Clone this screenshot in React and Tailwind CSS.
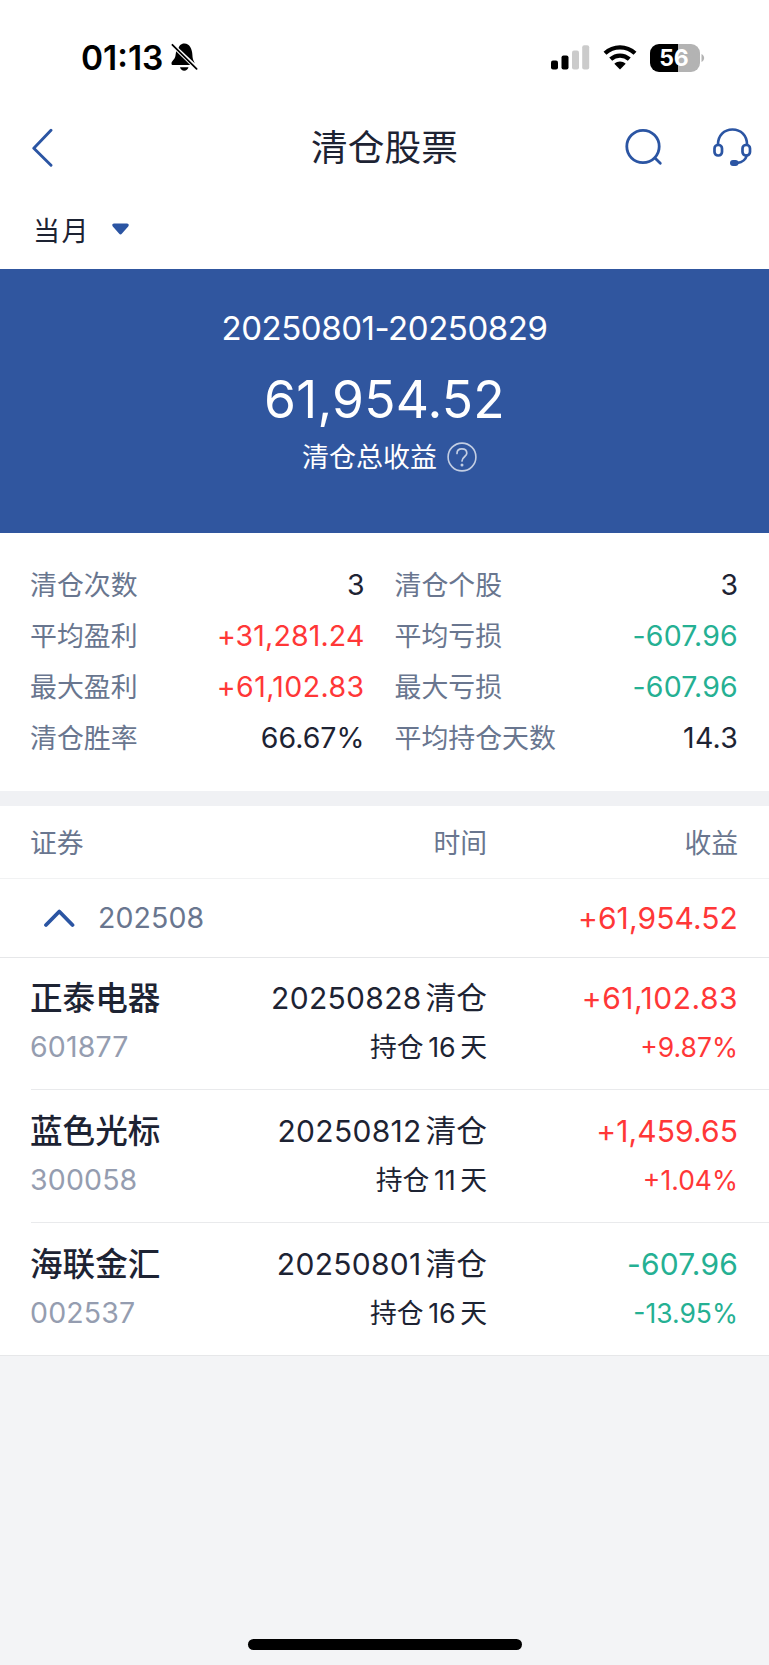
const STATS = [
  ["清仓次数", "3", "text-[#1d2333]", "清仓个股", "3", "text-[#1d2333]"],
  ["平均盈利", "+31,281.24", "text-[#ff3737] tracking-[0.150px]", "平均亏损", "-607.96", "text-[#25b093] tracking-[0.200px]"],
  ["最大盈利", "+61,102.83", "text-[#ff3737] tracking-[0.400px]", "最大亏损", "-607.96", "text-[#25b093] tracking-[0.200px]"],
  ["清仓胜率", "66.67%", "text-[#1d2333]", "平均持仓天数", "14.3", "text-[#1d2333] tracking-[0.200px]"],
];

const STOCKS = [
  { name: "正泰电器", code: "601877", date: "20250828", days: "16", profit: "+61,102.83", rate: "+9.87%", color: "text-[#ff3737]", tracking: "tracking-[0.500px]" },
  { name: "蓝色光标", code: "300058", date: "20250812", days: "11", profit: "+1,459.65", rate: "+1.04%", color: "text-[#ff3737]", tracking: "tracking-[0.100px]" },
  { name: "海联金汇", code: "002537", date: "20250801", days: "16", profit: "-607.96", rate: "-13.95%", color: "text-[#25b093]", tracking: "tracking-[0.200px]" },
];

function StatusBar() {
  return (
    <div className="flex h-[108px] items-start justify-between pt-[38px] pr-[64px] pl-[81px] text-black">
      <div className="flex h-[39px] items-center">
        <span className="pt-px text-[33.500px] leading-[39px] font-semibold tracking-[0px]">01:13</span>
        <svg className="ml-[8px]" width="27" height="29" viewBox="0 0 27 29">
          <path d="M13.500 0.500C9.500 0.500 8.200 3.300 7.600 5L24 20.500C23 18.500 21.500 16.500 21.400 12C21.200 6 18.500 0.500 13.500 0.500Z" />
          <path d="M5.100 8.300C4.900 10 4.700 11 4.500 12.500C3.900 17 0.500 17.600 0.500 20.500C0.500 21.600 1 22 2.200 22H19.200Z" />
          <path d="M9 24.300H17.500C16.800 26.500 15.300 27.700 13.200 27.700C11.100 27.700 9.600 26.500 9 24.300Z" />
          <path d="M1.400 1.800L25.600 25.800" stroke="black" strokeWidth="1.800" strokeLinecap="round" />
        </svg>
      </div>
      <div className="flex h-[39px] items-center">
        <svg width="39" height="25" viewBox="0 0 39 25">
          <rect x="0" y="15.500" width="7" height="9" rx="2" />
          <rect x="10.500" y="10.500" width="7" height="14" rx="2" />
          <rect x="21" y="5.500" width="7" height="19" rx="2" fill="#cbcbcb" />
          <rect x="31.200" y="0.300" width="7" height="24.200" rx="2" fill="#cbcbcb" />
        </svg>
        <svg className="ml-[13px]" width="34" height="25" viewBox="0 0 34 25">
          <path d="M2 8.300C10.500 0.400 23.500 0.400 32 8.300" fill="none" stroke="black" strokeWidth="4.300" />
          <path d="M7.700 14.200C13 9.300 21 9.300 26.300 14.200" fill="none" stroke="black" strokeWidth="4.300" />
          <path d="M11.300 18.800C14.700 15.800 19.300 15.800 22.700 18.800L17 24.500Z" />
        </svg>
        <div className="ml-[13px] flex h-[28px] w-[50px] items-center justify-center rounded-[9px] bg-linear-to-r from-black from-[56%] to-[#b3b3b3] to-[56%]">
          <span className="-ml-[2px] text-[23px] leading-[28px] font-bold tracking-[0px] text-white">56</span>
        </div>
        <svg className="ml-px" width="4" height="10" viewBox="0 0 4 10">
          <path d="M0.500 1C4 2.500 4 7.500 0.500 9Z" fill="#b3b3b3" />
        </svg>
      </div>
    </div>
  );
}

function NavBar() {
  return (
    <div className="grid h-[80px] grid-cols-[1fr_auto_1fr] items-center px-[17px] pb-[2px]">
      <svg className="ml-[14px]" width="22" height="40" viewBox="0 0 22 40" fill="none" stroke="#2b55a3" strokeWidth="2.900" strokeLinecap="round" strokeLinejoin="round">
        <path d="M20 3.200L2.800 21.200L20 38.200" />
      </svg>
      <h1 className="pt-[2px] text-[36.7px] leading-[50px] text-[#1d2333]">清仓股票</h1>
      <div className="flex items-center justify-end">
        <svg width="38" height="40" viewBox="0 0 38 40" fill="none" stroke="#2b55a3" strokeWidth="2.800" strokeLinecap="round">
          <circle cx="18" cy="19.500" r="16.200" />
          <path d="M30.200 31.200L35.300 36.200" />
        </svg>
        <svg className="ml-[49px]" width="40" height="40" viewBox="0 0 40 40" fill="none" stroke="#2b55a3" strokeWidth="2.700" strokeLinecap="round">
          <path d="M6 17.500C6 8.500 12 2.500 20.500 2.500C29 2.500 35 8.500 35 17.500" />
          <rect x="2.500" y="18" width="7.500" height="10.500" rx="3.500" />
          <rect x="30.500" y="18" width="7.500" height="10.500" rx="3.500" />
          <path d="M34.800 28.500C33.500 33 30 35.300 25.500 35.800" />
          <rect x="18" y="33" width="8.500" height="6" rx="3" fill="#2b55a3" stroke="none" />
        </svg>
      </div>
    </div>
  );
}

function Summary() {
  return (
    <section className="flex h-[264px] flex-col items-center bg-[#30569f] text-white">
      <div className="mt-[37px] text-[33px] leading-[44px] tracking-[-0.450px]">20250801-20250829</div>
      <div className="mt-[18px] text-[51.500px] leading-[62px] tracking-[0.200px]">61,954.52</div>
      <div className="mt-[8px] flex h-[38px] items-center pl-[10px]">
        <span className="pt-[2px] text-[27px] leading-[38px]">清仓总收益</span>
        <svg className="ml-[10px]" width="30" height="30" viewBox="0 0 30 30" fill="none" stroke="#c3cee3" strokeLinecap="round">
          <circle cx="15" cy="15" r="13.900" strokeWidth="1.600" />
          <path d="M10 11.500C10 8.500 12.200 6.900 14.900 6.900C17.700 6.900 19.800 8.600 19.800 11.200C19.800 14.600 15 15 15 19" strokeWidth="1.700" />
          <circle cx="15" cy="23" r="1.500" fill="#c3cee3" stroke="none" />
        </svg>
      </div>
    </section>
  );
}

function Stats() {
  return (
    <section className="flex h-[258px] flex-col pt-[26px] pr-[31px] pl-[30px]">
      {STATS.map(([l1, v1, c1, l2, v2, c2]) => (
        <div key={l1} className="flex h-[51px] items-center">
          <div className="flex w-[334.500px] items-center justify-between">
            <span className="text-[26.900px] leading-[40px] text-[#69768f]">{l1}</span>
            <span className={"pb-px text-[28.500px] leading-[39px] " + c1}>{v1}</span>
          </div>
          <div className="ml-[30px] flex grow items-center justify-between">
            <span className="text-[26.900px] leading-[40px] text-[#69768f]">{l2}</span>
            <span className={"pb-px text-[28.500px] leading-[39px] " + c2}>{v2}</span>
          </div>
        </div>
      ))}
    </section>
  );
}

function StockRow({ stock, first, last }) {
  return (
    <div className={last ? "border-b border-[#e6e7e9]" : "pl-[31px]"}>
      <div
        className={
          last
            ? "flex h-[132px] pt-[18px] pr-[31px] pl-[30px]"
            : first
              ? "flex h-[132px] border-b border-[#e9eaec] pt-[17px] pr-[31px]"
              : "flex h-[133px] border-b border-[#e9eaec] pt-[18px] pr-[31px]"
        }
      >
        <div className={last ? "w-[200px]" : "-ml-px w-[200px]"}>
          <div className="text-[32.600px] leading-[46px] font-medium text-[#1d2333]">{stock.name}</div>
          <div className="mt-[6px] text-[28.500px] leading-[40px] tracking-[0.150px] text-[#959db0]">{stock.code}</div>
        </div>
        <div className="flex w-[257px] flex-col items-end text-[#1d2333]">
          <div className="flex h-[46px] items-center gap-[4px]">
            <span className="text-[30px] tracking-[0.300px]">{stock.date}</span>
            <span className="text-[30.700px]">清仓</span>
          </div>
          <div className="mt-[6px] flex h-[40px] items-center text-[26.800px]">
            <span>持仓</span>
            <span className="mr-[4.500px] ml-[4.500px]">{stock.days}</span>
            <span>天</span>
          </div>
        </div>
        <div className={"flex grow flex-col items-end " + stock.color}>
          <div className={"text-[30px] leading-[46px] " + stock.tracking}>{stock.profit}</div>
          <div className="mt-[6px] text-[26.500px] leading-[40px]">{stock.rate}</div>
        </div>
      </div>
    </div>
  );
}

export default function App() {
  return (
    <div className="flex h-[1665px] w-[769px] flex-col overflow-hidden bg-[#f3f4f6] font-['Inter','Noto_Sans_CJK_SC',sans-serif]">
      <div className="bg-white">
        <StatusBar />
        <NavBar />
        <div className="flex h-[81px] items-center pl-[33px]">
          <span className="pt-[7px] text-[27px] leading-[40px] tracking-[1.500px] text-[#1d2333]">当月</span>
          <svg className="ml-[22px]" width="17" height="12" viewBox="0 0 17 12" fill="#2b55a3">
            <path d="M2 0.500H15C16.800 0.500 17.200 2.300 16.200 3.400L10 10.500C9 11.700 8 11.700 7 10.500L0.800 3.400C-0.200 2.300 0.200 0.500 2 0.500Z" />
          </svg>
        </div>
        <Summary />
        <Stats />
        <div className="h-[15px] bg-[#f0f1f4]" />
        <div className="flex h-[73px] items-center border-b border-[#f1f2f3] pt-px pr-[31px] pl-[30px] text-[26.800px] leading-[40px] text-[#69768f]">
          <span className="w-[200px]">证券</span>
          <span className="w-[257px] text-right">时间</span>
          <span className="grow text-right">收益</span>
        </div>
        <div className="flex h-[79px] items-center border-b border-[#e6e7e9] pr-[31px] pl-[43px]">
          <svg width="32" height="20" viewBox="0 0 32 20" fill="none" stroke="#2b55a3" strokeWidth="3.800" strokeLinecap="round" strokeLinejoin="round">
            <path d="M3 17L16.300 3.500L29.500 17" />
          </svg>
          <span className="ml-[23px] text-[28.500px] leading-[40px] tracking-[0.100px] text-[#69768f]">202508</span>
          <span className="grow text-right text-[30px] leading-[40px] tracking-[0.100px] text-[#ff3737]">+61,954.52</span>
        </div>
        {STOCKS.map((stock, i) => (
          <StockRow key={stock.code} stock={stock} first={i === 0} last={i === STOCKS.length - 1} />
        ))}
      </div>
      <div className="mt-auto flex justify-center pb-[15px]">
        <div className="h-[11px] w-[274px] rounded-full bg-black" />
      </div>
    </div>
  );
}
